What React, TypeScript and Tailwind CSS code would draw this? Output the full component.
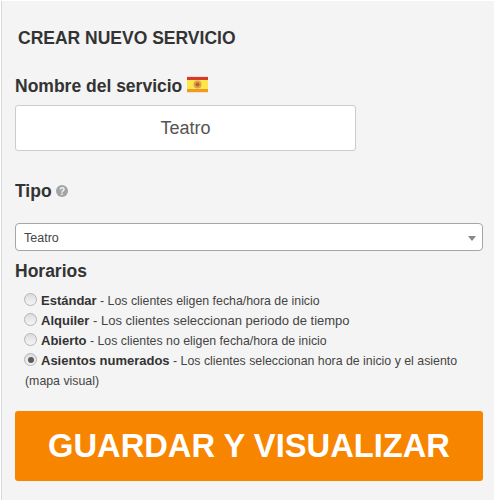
const schedules = [
  { name: 'Estándar', text: ' - Los clientes eligen fecha/hora de inicio', size: 'text-[12.35px]' },
  { name: 'Alquiler', text: ' - Los clientes seleccionan periodo de tiempo', size: 'text-[13px]' },
  { name: 'Abierto', text: ' - Los clientes no eligen fecha/hora de inicio', size: 'text-[12.35px]' },
  { name: 'Asientos numerados', text: ' - Los clientes seleccionan hora de inicio y el asiento', size: 'text-[12.35px]', checked: true },
];

function SpainFlag() {
  return (
    <svg width="21" height="17" viewBox="0 0 21 17" className="mb-[4px] ml-[1px] shrink-0">
      <rect x="0" y="0" width="21" height="17" fill="#e8e2d8" />
      <rect x="0" y="1" width="21" height="3" fill="#d8392b" />
      <rect x="0" y="4" width="21" height="9" fill="#fbe64b" />
      <rect x="0" y="13" width="21" height="3" fill="#f39a1c" />
      <circle cx="10.5" cy="8.5" r="4" fill="#dda24a" />
      <circle cx="10.5" cy="8.5" r="2" fill="#b8603a" />
    </svg>
  );
}

function HelpIcon() {
  return (
    <svg width="12" height="12" viewBox="0 0 12 12" className="shrink-0">
      <circle cx="6" cy="6" r="6" fill="#a3a3a3" />
      <text x="6" y="9.5" textAnchor="middle" fontSize="10" fontWeight="700" fill="#f4f4f4" fontFamily="Liberation Sans">?</text>
    </svg>
  );
}

function Radio({ checked }: { checked?: boolean }) {
  return (
    <span className="mr-[4px] mb-[3px] flex h-[13px] w-[13px] shrink-0 items-center justify-center rounded-full border border-[#b4b4b4] bg-gradient-to-b from-[#dcdcdc] to-[#f6f6f6]">
      {checked && <span className="h-[6px] w-[6px] rounded-full bg-[#5c5c5c]" />}
    </span>
  );
}

export default function App() {
  return (
    <div className="h-[500px] w-[494px] overflow-hidden bg-white pl-[1px] pt-[1px] font-['Liberation_Sans',Arial,sans-serif] text-[#333]">
      <div className="flex h-full w-full flex-col border-l border-[#d8d8d8] bg-[#f4f4f4] pl-[13px] pr-[10px]">
        <h1 className="mt-[28px] ml-[3px] text-[17.5px] leading-[18px] font-bold">CREAR NUEVO SERVICIO</h1>

        <label className="mt-[28px] flex h-[22px] items-center gap-[4px] text-[17.5px] font-bold">
          Nombre del servicio <SpainFlag />
        </label>
        <div className="mt-[8px] flex h-[46px] w-[341px] items-center justify-center rounded-[3px] border border-[#ccc] bg-white text-[18px] text-[#555]">
          Teatro
        </div>

        <label className="mt-[29px] flex h-[22px] items-center gap-[4px] text-[17.5px] font-bold">
          Tipo <HelpIcon />
        </label>
        <div className="mt-[21px] flex h-[28px] w-[468px] items-center justify-between rounded-[4px] border border-[#a6a6a6] bg-white pl-[8px] pr-[6px] pt-[2px] text-[12.5px] text-[#444]">
          Teatro
          <span className="h-0 w-0 border-x-[4px] border-t-[5px] border-x-transparent border-t-[#888]" />
        </div>

        <h2 className="mt-[9px] text-[17.5px] leading-[22px] font-bold">Horarios</h2>
        <div className="mt-[9px] ml-[9px] text-[#444]">
          {schedules.map(s => (
            <div key={s.name} className={`flex h-[20px] items-center ${s.size}`}>
              <Radio checked={s.checked} />
              <span className="whitespace-pre">
                <b className="text-[13px] text-[#333]">{s.name}</b>
                {s.text}
              </span>
            </div>
          ))}
          <div className="flex h-[20px] items-center pl-[1px] text-[12.35px]">(mapa visual)</div>
        </div>

        <button className="mt-[20px] flex h-[70px] w-[468px] items-center justify-center rounded-[3px] bg-[#f88500] text-[32.7px] font-bold text-white">
          GUARDAR Y VISUALIZAR
        </button>
      </div>
    </div>
  );
}
